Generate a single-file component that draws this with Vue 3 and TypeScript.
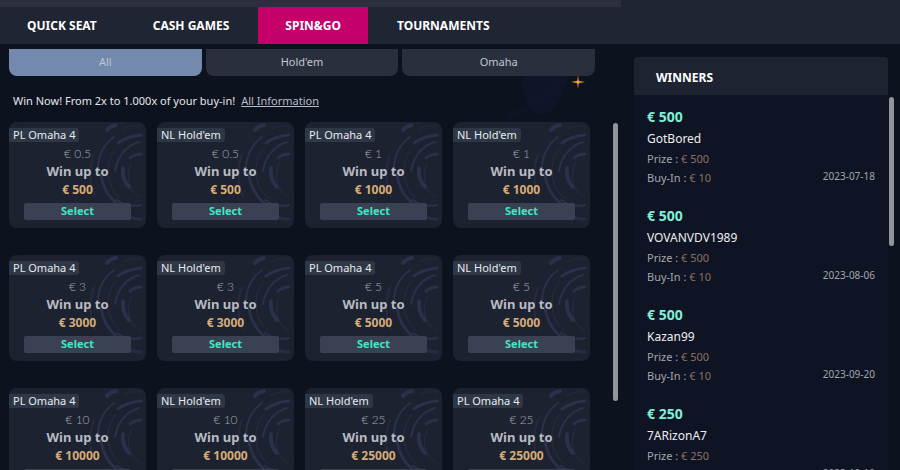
<script setup lang="ts">
import { ref } from 'vue'

interface Game { kind: string; buyIn: string; top: number }
interface Winner { amount: number; name: string; buyIn: number; date: string }

const sections = ['QUICK SEAT', 'CASH GAMES', 'SPIN&GO', 'TOURNAMENTS']
const section = ref('SPIN&GO')

const filters = ['All', "Hold'em", 'Omaha']
const filter = ref('All')

const OMAHA = 'PL Omaha 4'
const HOLDEM = "NL Hold'em"
const games: Game[] = [
  { kind: OMAHA, buyIn: '0.5', top: 500 },
  { kind: HOLDEM, buyIn: '0.5', top: 500 },
  { kind: OMAHA, buyIn: '1', top: 1000 },
  { kind: HOLDEM, buyIn: '1', top: 1000 },
  { kind: OMAHA, buyIn: '3', top: 3000 },
  { kind: HOLDEM, buyIn: '3', top: 3000 },
  { kind: OMAHA, buyIn: '5', top: 5000 },
  { kind: HOLDEM, buyIn: '5', top: 5000 },
  { kind: OMAHA, buyIn: '10', top: 10000 },
  { kind: HOLDEM, buyIn: '10', top: 10000 },
  { kind: HOLDEM, buyIn: '25', top: 25000 },
  { kind: OMAHA, buyIn: '25', top: 25000 },
]

const winners: Winner[] = [
  { amount: 500, name: 'GotBored', buyIn: 10, date: '2023-07-18' },
  { amount: 500, name: 'VOVANVDV1989', buyIn: 10, date: '2023-08-06' },
  { amount: 500, name: 'Kazan99', buyIn: 10, date: '2023-09-20' },
  { amount: 250, name: '7ARizonA7', buyIn: 5, date: '2023-10-10' },
]
</script>

<template>
  <div class="lobby">
    <div class="strip"></div>
    <nav class="nav">
      <a
        v-for="s in sections"
        :key="s"
        href="#"
        class="nav-link"
        :class="{ active: s === section }"
        @click.prevent="section = s"
      >{{ s }}</a>
    </nav>

    <div class="body">
      <main class="main">
        <div class="filters">
          <button
            v-for="f in filters"
            :key="f"
            type="button"
            class="filter"
            :class="{ active: f === filter }"
            @click="filter = f"
          >{{ f }}</button>
        </div>

        <div class="promo">
          <svg class="planet" viewBox="0 0 70 46" aria-hidden="true">
            <path d="M17 0H61C61 20 48 39 32 39C22 32 17 18 17 0Z" fill="#101a35" opacity=".45" />
            <path d="M0 46C25 36 52 17 68 0H61C46 15 22 30 4 36Z" fill="#111b33" opacity=".3" />
          </svg>
          <svg class="star" viewBox="0 0 14 14" aria-hidden="true">
            <path d="M7 0L7.8 5.8L14 7L7.8 8.2L7 14L6.2 8.2L0 7L6.2 5.8Z" fill="#c98d33" />
            <circle cx="7" cy="7" r="1.5" fill="#e5a43c" />
          </svg>
          <span>Win Now! From 2x to 1.000x of your buy-in!</span>
          <a href="#" class="info">All Information</a>
        </div>

        <div class="games">
          <div class="grid">
            <article v-for="(g, i) in games" :key="i" class="card">
              <svg class="rings" viewBox="0 0 56 106" aria-hidden="true">
                <g fill="none" stroke="#2b304b" stroke-linecap="round">
                  <path d="M20 8Q23 4 29 3" stroke-width="4" />
                  <path d="M36 7Q44 3 54 4" stroke-width="1" opacity=".6" />
                  <path d="M31 21Q41 14 54 13" stroke-width="3" />
                  <path d="M43 36Q48 32 54 32" stroke-width="3" />
                  <path d="M27 15C16 23 11 34 11 47" stroke-width="2" />
                  <path d="M14 52C15 64 20 73 29 81" stroke-width="3" />
                  <path d="M52 20C38 24 30 36 28 49" stroke-width="2" />
                  <path d="M29 26C17 40 18 63 33 76" stroke-width="1" opacity=".8" />
                  <path d="M36 46C35 55 38 61 42 65" stroke-width="4" />
                  <path d="M44 42C38 57 43 71 54 75" stroke-width="1" opacity=".8" />
                  <path d="M7 32C2 45 2 61 8 74" stroke-width="2" opacity=".6" />
                  <path d="M30 78Q41 86 54 83" stroke-width="2" />
                  <path d="M37 92Q44 97 54 97" stroke-width="3" opacity=".8" />
                </g>
              </svg>
              <span class="kind">{{ g.kind }}</span>
              <span class="buy-in">€ {{ g.buyIn }}</span>
              <span class="label">Win up to</span>
              <strong class="top">€ {{ g.top }}</strong>
              <button type="button" class="select">Select</button>
            </article>
          </div>
          <div class="bar games-bar"></div>
        </div>
      </main>

      <aside class="side">
        <div class="panel">
          <h2 class="panel-title">WINNERS</h2>
          <ul class="winners">
            <li v-for="w in winners" :key="w.name" class="winner">
              <div>
                <strong class="amount">€ {{ w.amount }}</strong>
                <span class="name">{{ w.name }}</span>
                <span class="detail">Prize : <em>€ {{ w.amount }}</em></span>
                <span class="detail">Buy-In : <em>€ {{ w.buyIn }}</em></span>
              </div>
              <time class="date">{{ w.date }}</time>
            </li>
          </ul>
        </div>
        <div class="bar side-bar"></div>
      </aside>
    </div>
  </div>
</template>

<style>
body {
  background: #0d121f;
}
</style>

<style scoped>
.lobby {
  display: flex;
  flex-direction: column;
  height: 100vh;
  overflow: hidden;
  background: #0d121f;
  color: #e6e7ea;
  font-family: "Noto Sans", sans-serif;
  font-size: 11px;
}
.lobby * {
  box-sizing: border-box;
}
button {
  border: 0;
  font-family: inherit;
  cursor: pointer;
}
a {
  color: inherit;
}
.strip {
  flex: none;
  height: 7px;
  background: linear-gradient(90deg, #2c303e 69%, #1f2533 69%);
}
.nav {
  display: flex;
  flex: none;
  gap: 2px;
  background: #1f2532;
}
.nav-link {
  padding: 0 27px;
  color: #fff;
  font-size: 12px;
  font-weight: 700;
  line-height: 37px;
  text-decoration: none;
}
.nav-link.active {
  background: #c5006b;
}
.body {
  display: flex;
  flex: 1;
  min-height: 0;
}
.main {
  display: flex;
  flex: 1;
  flex-direction: column;
  min-width: 0;
  padding: 5px 16px 0 9px;
}
.filters {
  display: flex;
  flex: none;
  gap: 4px;
  margin-right: 23px;
}
.filter {
  flex: 1;
  height: 27px;
  padding: 0 0 2px;
  border-radius: 0 0 8px 8px;
  background: #2a2f3d;
  color: #c3c7d2;
  font-size: 11px;
}
.filter.active {
  background: #7389ad;
  color: #bac5da;
}
.promo {
  position: relative;
  display: flex;
  flex: none;
  gap: 6px;
  padding: 13px 4px 9px;
  line-height: 24px;
}
.planet {
  position: absolute;
  top: 0;
  right: 43px;
  width: 70px;
  height: 46px;
}
.star {
  position: absolute;
  top: -1px;
  right: 33px;
  width: 14px;
  height: 14px;
}
.info {
  color: #b9bcc5;
}
.games {
  display: flex;
  flex: 1;
  gap: 23px;
  min-height: 0;
}
.grid {
  display: grid;
  flex: 1;
  grid-template-columns: repeat(4, 1fr);
  gap: 27px 11px;
  align-content: start;
  overflow: hidden;
}
.card {
  position: relative;
  display: flex;
  flex-direction: column;
  align-items: center;
  padding: 6px 15px 8px;
  border-radius: 8px;
  background: #1d2230;
  text-align: center;
}
.card > * {
  position: relative;
}
.card > .rings {
  position: absolute;
  top: 0;
  right: 3px;
  width: 56px;
  height: 106px;
}
.kind {
  align-self: flex-start;
  margin-left: -15px;
  padding: 0 4px;
  border-radius: 0 3px 3px 0;
  background: #2d3746;
  color: #e9ebef;
  font-size: 11px;
  line-height: 14px;
}
.buy-in {
  margin-top: 4px;
  color: #a3a6b0;
  font-family: Lato, sans-serif;
  font-size: 12px;
  font-weight: 300;
  line-height: 16px;
}
.label {
  color: #b9bbc3;
  font-size: 13px;
  font-weight: 700;
  line-height: 18px;
}
.top {
  color: #d7ad77;
  font-size: 12px;
  line-height: 20px;
}
.select {
  align-self: stretch;
  height: 17px;
  margin-top: 3px;
  padding: 0 0 1px;
  border-radius: 2px;
  background: #3a4152;
  color: #43e6c4;
  font-size: 11px;
  font-weight: 700;
  line-height: 16px;
}
.bar {
  flex: none;
  width: 5px;
  border-radius: 3px;
  background: #92949b;
}
.games-bar {
  height: 80%;
  margin-top: 1px;
}
.side {
  display: flex;
  flex: none;
  gap: 1px;
  padding: 13px 6px 0 0;
}
.panel {
  width: 254px;
}
.panel-title {
  margin: 0;
  padding: 4px 22px 0;
  border-radius: 4px 4px 0 0;
  background: #1e2331;
  color: #fff;
  font-size: 12px;
  line-height: 34px;
}
.winners {
  margin: 0;
  padding: 0;
  background: #0f1424;
  list-style: none;
}
.winner {
  display: flex;
  align-items: flex-end;
  justify-content: space-between;
  padding: 11px 13px 7px;
}
.amount,
.name,
.detail {
  display: block;
}
.amount {
  color: #7ff0d8;
  font-size: 14px;
  line-height: 22px;
}
.name {
  color: #eeeeef;
  font-size: 12px;
  line-height: 22px;
}
.detail {
  color: #a3a6ae;
  font-size: 11px;
  line-height: 18px;
}
.detail + .detail {
  line-height: 19px;
}
.detail em {
  color: #8b715f;
  font-style: normal;
}
.date {
  color: #a3a6ae;
  font-size: 10px;
  line-height: 22px;
}
.side-bar {
  height: 149px;
  margin-top: 40px;
}
</style>
